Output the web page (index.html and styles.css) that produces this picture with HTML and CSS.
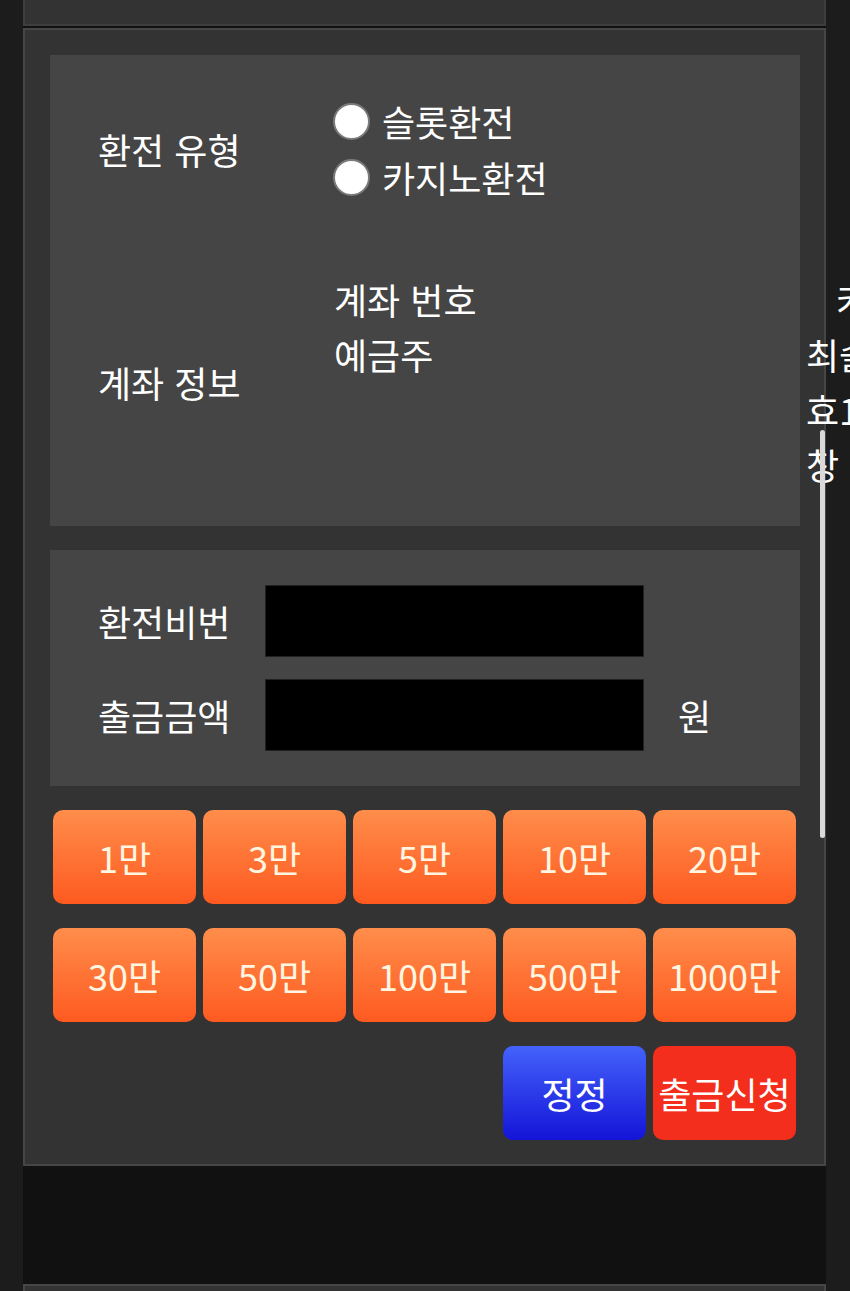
FILE: index.html
```html
<!DOCTYPE html>
<html lang="ko">
<head>
    <meta charset="UTF-8">
    <meta name="viewport" content="width=device-width, initial-scale=1.0">
    <title>출금신청</title>
    <link rel="stylesheet" href="styles.css">
</head>

<body>
    <div id="wrap">
        <div class="panel panel-top"></div>

        <div class="panel panel-main">
            <div class="box info">
                <div class="row">
                    <div class="lbl">환전 유형</div>
                    <div class="val">
                        <label class="radio"><span class="dot"></span>슬롯환전</label>
                        <label class="radio"><span class="dot"></span>카지노환전</label>
                    </div>
                    <div class="extra"></div>
                </div>
                <div class="row row-acc">
                    <div class="lbl">계좌 정보</div>
                    <div class="val top">
                        <p>계좌 번호</p>
                        <p>예금주</p>
                    </div>
                    <div class="extra">
                        <p class="ind">카</p>
                        <p>최솔</p>
                        <p>효1</p>
                        <p>창</p>
                    </div>
                </div>
            </div>

            <div class="box form">
                <div class="frow">
                    <div class="lbl">환전비번</div>
                    <div class="inp"></div>
                    <div></div>
                </div>
                <div class="frow">
                    <div class="lbl">출금금액</div>
                    <div class="inp"></div>
                    <div class="unit">원</div>
                </div>
            </div>

            <div class="btns">
                <div class="btn">1만</div>
                <div class="btn">3만</div>
                <div class="btn">5만</div>
                <div class="btn">10만</div>
                <div class="btn">20만</div>
                <div class="btn">30만</div>
                <div class="btn">50만</div>
                <div class="btn">100만</div>
                <div class="btn">500만</div>
                <div class="btn">1000만</div>
                <div class="btn blue c4">정정</div>
                <div class="btn red">출금신청</div>
            </div>
        </div>

        <div class="gap"></div>
        <div class="panel panel-next"></div>
    </div>

    <!-- overlay scrollbar -->
    <div class="scrollbar"></div>
</body>

</html>
```

FILE: styles.css
```css
html,
body {
    margin: 0;
    overflow-x: hidden;
}

body {
    background: #1c1c1c;
    font-family: "Noto Sans CJK KR", "Noto Sans", sans-serif;
    color: #fff;
    font-size: 36px;
}

p {
    margin: 0;
}

#wrap {
    width: 803px;
    margin-left: 23px;
    background: #111;
}

.panel {
    background: #333;
    border: 2px solid #464646;
    box-sizing: border-box;
}

.panel-top {
    height: 26px;
    border-top: 0;
    border-color: #3e3e3e;
    margin-bottom: 2px;
}

.panel-main {
    padding: 25px 24px 24px 25px;
}

.gap {
    height: 118px;
}

.panel-next {
    height: 20px;
    border-bottom: 0;
}

.box {
    background: #454545;
}

/* account info */

.info {
    padding: 38px 0 34px 48px;
    display: flex;
    flex-direction: column;
    gap: 67px;
}

.row {
    display: grid;
    grid-template-columns: 236px 472px auto;
    align-items: center;
    line-height: 55px;
}

.row .top {
    align-self: start;
}

.radio {
    display: flex;
    align-items: center;
    line-height: 56px;
}

.dot {
    width: 33px;
    height: 33px;
    border-radius: 50%;
    background: #fff;
    border: 2px solid #7a7a7a;
    margin: 0 12px 0 -1px;
}

.extra {
    white-space: nowrap;
}

.extra .ind {
    padding-left: 30px;
}

/* password / amount */

.form {
    margin-top: 24px;
    padding: 36px 0 36px 48px;
    display: flex;
    flex-direction: column;
    gap: 24px;
}

.frow {
    display: grid;
    grid-template-columns: 168px 377px auto;
    align-items: center;
}

.inp {
    height: 70px;
    background: #000;
    box-shadow: 0 0 0 1px #222;
}

.unit {
    padding-left: 35px;
}

/* amount buttons */

.btns {
    margin-top: 24px;
    display: grid;
    grid-template-columns: repeat(5, 1fr);
    row-gap: 24px;
}

.btn {
    height: 94px;
    margin: 0 4px 0 3px;
    border-radius: 10px;
    background: linear-gradient(#ff8d4b, #fe5a20);
    color: #fff6e2;
    display: flex;
    align-items: center;
    justify-content: center;
    white-space: nowrap;
}

.btn.c4 {
    grid-column: 4;
}

.btn.blue {
    background: linear-gradient(#4462fb, #1414d8);
    color: #fff;
}

.btn.red {
    background: #f42e1c;
    color: #fff;
}

.scrollbar {
    position: absolute;
    left: 820px;
    top: 430px;
    width: 5px;
    height: 408px;
    border-radius: 3px;
    background: #d9d9d9;
}
```
